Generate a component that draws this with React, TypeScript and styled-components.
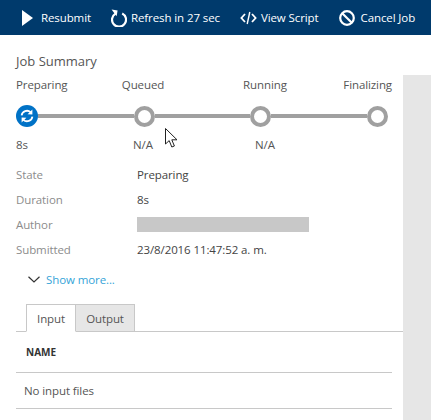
import React from 'react';
import styled, { createGlobalStyle } from 'styled-components';

const GlobalStyle = createGlobalStyle`
  html, body {
    margin: 0;
    padding: 0;
    height: 420px;
    overflow: hidden;
    background: #fff;
  }

  body {
    font-family: "Open Sans", "Noto Sans", sans-serif;
    font-size: 12px;
    color: #444;
  }
`;

const Page = styled.div`
  position: relative;
  width: 431px;
  height: 420px;
  display: flex;
  flex-direction: column;
  overflow: hidden;
`;

const Toolbar = styled.div`
  height: 35px;
  flex: none;
  display: flex;
  align-items: center;
  gap: 20px;
  padding-left: 22px;
  background: #003a6c;
  color: #fff;
  box-sizing: border-box;
`;

const ToolButton = styled.div<{ $gap: number }>`
  display: flex;
  align-items: center;
  gap: ${(p) => p.$gap}px;
  font-size: 11.5px;
  white-space: nowrap;
  letter-spacing: -0.1px;

  svg {
    display: block;
    flex: none;
  }
`;

const Title = styled.div`
  height: 40px;
  flex: none;
  box-sizing: border-box;
  padding: 16px 0 0 16px;
  font-size: 13px;
  line-height: 20px;
  color: #555;
`;

const Content = styled.div`
  flex: 1;
  display: flex;
`;

const Main = styled.div`
  width: 403px;
  flex: none;
`;

const SidePanel = styled.div`
  flex: 1;
  background: #e6e6e6;
`;

const Stepper = styled.div`
  padding: 0 0 0 16px;
  width: 376px;
`;

const StepLabels = styled.div`
  display: grid;
  grid-template-columns: 72px 110px 134px 60px;
  height: 20px;
  line-height: 20px;
  font-size: 11.5px;
  letter-spacing: -0.1px;
  color: #555;
`;

const StepLabel = styled.div<{ $align: string }>`
  text-align: ${(p) => p.$align};
  white-space: nowrap;
`;

const Track = styled.div`
  display: flex;
  align-items: center;
  width: 372px;
  height: 22px;
  margin: 10px 0 8px;
`;

const Connector = styled.div`
  flex: 1;
  height: 4px;
  background: #a0a0a0;
`;

const StepCircle = styled.div`
  width: 21px;
  height: 21px;
  flex: none;
  box-sizing: border-box;
  border: 4px solid #a0a0a0;
  border-radius: 50%;
  background: #fff;
`;

const ActiveCircle = styled.div`
  width: 22px;
  height: 22px;
  flex: none;
  border-radius: 50%;
  background: #0072c6;
  display: flex;
  align-items: center;
  justify-content: center;
`;

const Details = styled.div`
  display: grid;
  grid-template-columns: 121px 1fr;
  grid-auto-rows: 25px;
  align-items: center;
  padding-left: 16px;
  margin-top: 7px;
  font-size: 11.5px;
  letter-spacing: -0.1px;
`;

const DetailLabel = styled.div`
  color: #8c8c8c;
`;

const DetailValue = styled.div`
  color: #444;
`;

const Redacted = styled.div`
  width: 172px;
  height: 15px;
  background: #c8c8c8;
`;

const ShowMore = styled.div`
  display: flex;
  align-items: center;
  gap: 6px;
  height: 20px;
  margin: 7px 0 0 28px;
  font-size: 11.5px;
  letter-spacing: -0.1px;
  color: #35a4d8;
`;

const Tabs = styled.div`
  display: flex;
  height: 28px;
  box-sizing: border-box;
  margin: 15px 0 0 16px;
  padding-left: 10px;
  border-bottom: 1px solid #c8c8c8;
`;

const Tab = styled.div<{ $active?: boolean }>`
  height: 28px;
  box-sizing: border-box;
  width: ${(p) => (p.$active ? 50 : 59)}px;
  display: flex;
  align-items: center;
  justify-content: center;
  font-size: 11.5px;
  letter-spacing: -0.1px;
  color: #555;
  border: 1px solid #c8c8c8;
  border-left-width: ${(p) => (p.$active ? 1 : 0)}px;
  border-bottom-color: ${(p) => (p.$active ? '#fff' : '#c8c8c8')};
  background: ${(p) => (p.$active ? '#fff' : '#e6e6e6')};
`;

const Table = styled.div`
  width: 376px;
  margin-left: 16px;
`;

const HeaderRow = styled.div`
  height: 41px;
  box-sizing: border-box;
  display: flex;
  align-items: center;
  padding-left: 10px;
  border-bottom: 1px solid #c8c8c8;
  font-size: 10px;
  font-weight: 700;
  color: #333;
`;

const BodyRow = styled.div`
  height: 36px;
  box-sizing: border-box;
  display: flex;
  align-items: center;
  padding-left: 8px;
  border-bottom: 1px solid #c8c8c8;
  font-size: 11.5px;
  letter-spacing: -0.1px;
  color: #555;
`;

const Cursor = styled.svg`
  position: absolute;
  left: 165px;
  top: 128px;
`;

const PlayIcon = () => (
  <svg width="11" height="16" viewBox="0 0 11 16">
    <polygon points="0,0 11,8 0,16" fill="#fff" />
  </svg>
);

const RefreshIcon = () => (
  <svg width="16" height="18" viewBox="0 0 16 18" fill="none">
    <path d="M4.5 4.6A7 7 0 1 0 11.2 4.4" stroke="#fff" strokeWidth="2.2" />
    <polygon points="0.6,0.6 6.6,1.4 5.6,7.2" fill="#fff" />
  </svg>
);

const CodeIcon = () => (
  <svg width="17" height="14" viewBox="0 0 17 14" fill="none" stroke="#fff" strokeWidth="1.8">
    <path d="M5 3L1.4 7L5 11" />
    <path d="M12 3L15.6 7L12 11" />
    <path d="M9.8 1L7.2 13" strokeWidth="1.4" />
  </svg>
);

const CancelIcon = () => (
  <svg width="16" height="16" viewBox="0 0 16 16" fill="none" stroke="#fff" strokeWidth="2.2">
    <circle cx="8" cy="8" r="6.8" />
    <path d="M3.2 3.2L12.8 12.8" />
  </svg>
);

const SyncIcon = () => (
  <svg width="14" height="14" viewBox="0 0 14 14" fill="none">
    <path d="M1.6 6.4A5.4 5.4 0 0 1 10.6 3.2" stroke="#fff" strokeWidth="1.8" />
    <polygon points="12.4,0.6 12.4,5.6 7.6,5.2" fill="#fff" />
    <path d="M12.4 7.6A5.4 5.4 0 0 1 3.4 10.8" stroke="#fff" strokeWidth="1.8" />
    <polygon points="1.6,13.4 1.6,8.4 6.4,8.8" fill="#fff" />
  </svg>
);

const ChevronIcon = () => (
  <svg width="12" height="7" viewBox="0 0 12 7" fill="none" stroke="#333" strokeWidth="1.2">
    <path d="M0.5 0.8L6 6L11.5 0.8" />
  </svg>
);

const steps = [
  { name: 'Preparing', align: 'left' },
  { name: 'Queued', align: 'center' },
  { name: 'Running', align: 'center' },
  { name: 'Finalizing', align: 'right' },
];

const values = ['8s', 'N/A', 'N/A', ''];

const App = () => {
  return (
    <Page>
      <GlobalStyle />
      <Toolbar>
        <ToolButton $gap={8}>
          <PlayIcon />
          Resubmit
        </ToolButton>
        <ToolButton $gap={4}>
          <RefreshIcon />
          Refresh in 27 sec
        </ToolButton>
        <ToolButton $gap={4}>
          <CodeIcon />
          View Script
        </ToolButton>
        <ToolButton $gap={6}>
          <CancelIcon />
          Cancel Job
        </ToolButton>
      </Toolbar>
      <Title>Job Summary</Title>
      <Content>
        <Main>
          <Stepper>
            <StepLabels>
              {steps.map((step) => (
                <StepLabel key={step.name} $align={step.align}>
                  {step.name}
                </StepLabel>
              ))}
            </StepLabels>
            <Track>
              <ActiveCircle>
                <SyncIcon />
              </ActiveCircle>
              <Connector />
              <StepCircle />
              <Connector />
              <StepCircle />
              <Connector />
              <StepCircle />
            </Track>
            <StepLabels>
              {values.map((value, index) => (
                <StepLabel key={index} $align={steps[index].align}>
                  {value}
                </StepLabel>
              ))}
            </StepLabels>
          </Stepper>
          <Details>
            <DetailLabel>State</DetailLabel>
            <DetailValue>Preparing</DetailValue>
            <DetailLabel>Duration</DetailLabel>
            <DetailValue>8s</DetailValue>
            <DetailLabel>Author</DetailLabel>
            <Redacted />
            <DetailLabel>Submitted</DetailLabel>
            <DetailValue>23/8/2016 11:47:52 a. m.</DetailValue>
          </Details>
          <ShowMore>
            <ChevronIcon />
            Show more...
          </ShowMore>
          <Tabs>
            <Tab $active>Input</Tab>
            <Tab>Output</Tab>
          </Tabs>
          <Table>
            <HeaderRow>NAME</HeaderRow>
            <BodyRow>No input files</BodyRow>
          </Table>
        </Main>
        <SidePanel />
      </Content>
      <Cursor width="13" height="20" viewBox="0 0 13 20">
        <path d="M0.5 0.5V16L4.2 12.6L6.8 19L9.4 18L6.8 11.8H12L0.5 0.5Z" fill="#fff" stroke="#222" strokeWidth="1" />
      </Cursor>
    </Page>
  );
};

export default App;
